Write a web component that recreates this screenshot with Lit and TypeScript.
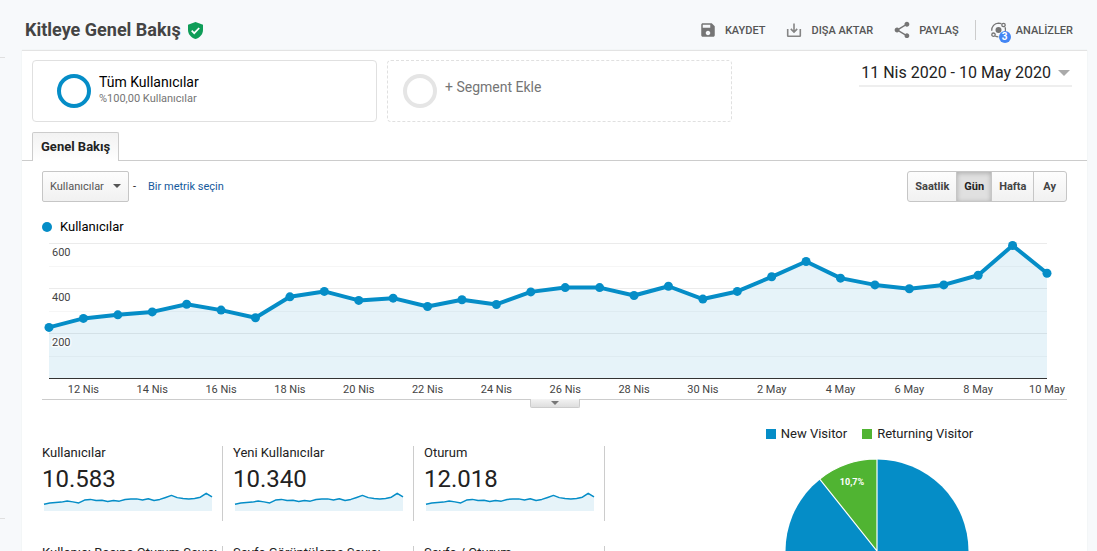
import { LitElement, html, css, svg } from "lit";
import { customElement, property, state } from "lit/decorators.js";
import { classMap } from "lit/directives/class-map.js";

const DAILY_USERS = [
  227, 267, 283, 296, 330, 304, 270, 363, 387, 347, 357, 320, 350, 329, 385,
  404, 404, 369, 410, 353, 387, 452, 520, 446, 416, 399, 416, 459, 591, 468,
];

const FIRST_DAY = 11;
const DAYS_IN_APRIL = 30;
const AXIS_MAX = 600;

function dayLabel(index: number): string {
  const day = FIRST_DAY + index;
  return day <= DAYS_IN_APRIL ? `${day} Nis` : `${day - DAYS_IN_APRIL} May`;
}

@customElement("trend-chart")
export class TrendChart extends LitElement {
  @property({ attribute: false }) values: number[] = [];

  static styles = css`
    :host { display: block; }
    .plot { display: block; width: 100%; height: 156px; overflow: visible; }
    .inner { overflow: visible; }
    .grid { stroke: #000; stroke-opacity: 0.08; }
    .grid.minor { stroke-opacity: 0.035; }
    .axis { stroke: #333; }
    .area { fill: #058dc7; fill-opacity: 0.1; }
    .line { fill: none; stroke: #058dc7; stroke-width: 4; stroke-linejoin: round; vector-effect: non-scaling-stroke; }
    .dot { fill: #058dc7; }
    .label { font-size: 11px; fill: #444; }
    .tick { text-anchor: middle; }
    .halo { stroke: #fff; stroke-width: 3; stroke-opacity: 0.7; paint-order: stroke; stroke-linejoin: round; }
  `;

  render() {
    const last = this.values.length - 1;
    const points = this.values.map((v, i) => `${i},${AXIS_MAX - v}`).join(" ");
    const y = (v: number) => 0.5 + ((AXIS_MAX - v) * 135) / AXIS_MAX;
    const x = (i: number) => `${(i / last) * 100}%`;
    return html`<svg class="plot" role="img" aria-label="Kullanıcılar">
      ${[600, 500, 400, 300, 200, 100].map(
        (v) => svg`<line class=${v % 200 ? "grid minor" : "grid"} x1="0" x2="100%" y1=${Math.floor(y(v)) + 0.5} y2=${Math.floor(y(v)) + 0.5}></line>`
      )}
      <svg class="inner" x="0" y="0.5" width="100%" height="135" viewBox="0 0 ${last} ${AXIS_MAX}" preserveAspectRatio="none">
        <polygon class="area" points="0,${AXIS_MAX} ${points} ${last},${AXIS_MAX}"></polygon>
        <polyline class="line" points=${points}></polyline>
      </svg>
      <line class="axis" x1="0" x2="100%" y1="135.5" y2="135.5"></line>
      ${this.values.map((v, i) => svg`<circle class="dot" cx=${x(i)} cy=${y(v)} r="4.5"></circle>`)}
      ${[600, 400, 200].map((v) => svg`<text class="label halo" x="3" y=${y(v) + 12.5}>${v}</text>`)}
      ${this.values.map((_, i) => (i % 2 ? svg`<text class="label tick" x=${x(i)} y="150">${dayLabel(i)}</text>` : null))}
    </svg>`;
  }
}

@customElement("metric-tile")
export class MetricTile extends LitElement {
  @property() label = "";
  @property() value = "";
  @property({ attribute: false }) values: number[] = [];

  static styles = css`
    :host { display: block; height: 75px; border-right: 1px solid #ccc; color: #222; white-space: nowrap; }
    .label { font-size: 13px; line-height: 13px; }
    .value { font-size: 24px; line-height: 28px; margin-top: 6px; }
    .spark { display: block; width: calc(100% - 12px); height: 18px; margin-left: 2px; overflow: visible; }
    .area { fill: #058dc7; fill-opacity: 0.1; }
    .line { fill: none; stroke: #058dc7; stroke-width: 1.5; stroke-linejoin: round; vector-effect: non-scaling-stroke; }
  `;

  render() {
    const last = this.values.length - 1;
    const points = this.values.map((v, i) => `${i},${AXIS_MAX - v}`).join(" ");
    return html`
      <div class="label">${this.label}</div>
      <div class="value">${this.value}</div>
      <svg class="spark" viewBox="0 0 ${last} ${AXIS_MAX}" preserveAspectRatio="none" aria-hidden="true">
        <polygon class="area" points="0,${AXIS_MAX} ${points} ${last},${AXIS_MAX}"></polygon>
        <polyline class="line" points=${points}></polyline>
      </svg>
    `;
  }
}

@customElement("visitor-pie")
export class VisitorPie extends LitElement {
  @property({ type: Number }) returning = 0;

  static styles = css`
    :host { display: flex; flex-direction: column; align-items: center; }
    .legend { display: flex; font-size: 13px; line-height: 18px; color: #222; }
    .item { display: flex; align-items: center; gap: 5px; margin-right: 15px; }
    .swatch { width: 10px; height: 10px; background: #058dc7; }
    .swatch.green { background: #50b432; }
    .pie { display: block; width: 184px; height: 184px; margin-top: 16px; }
    .share { font-size: 9px; font-weight: 700; fill: #fff; text-anchor: middle; }
  `;

  render() {
    const angle = (this.returning / 100) * 2 * Math.PI;
    const px = 92 - 92 * Math.sin(angle);
    const py = 92 - 92 * Math.cos(angle);
    return html`
      <div class="legend">
        <span class="item"><span class="swatch"></span>New Visitor</span>
        <span class="item"><span class="swatch green"></span>Returning Visitor</span>
      </div>
      <svg class="pie" viewBox="0 0 184 184" role="img" aria-label="New Visitor, Returning Visitor">
        <circle cx="92" cy="92" r="91.5" fill="#058dc7"></circle>
        <path d="M92 92L${px} ${py}A92 92 0 0 1 92 0Z" fill="#50b432" stroke="#fff" stroke-width="1.2"></path>
        <text class="share" x="67" y="26">${this.returning.toLocaleString("tr-TR")}%</text>
      </svg>
    `;
  }
}

@customElement("app-root")
export class AppRoot extends LitElement {
  @state() private period = "Gün";

  static styles = css`
    :host {
      display: flex;
      height: 100vh;
      overflow: hidden;
      background: #f7f9fb;
      font-family: Roboto, sans-serif;
      color: #222;
    }
    *, *::before, *::after { box-sizing: border-box; }
    button, select { font-family: inherit; margin: 0; }
    .rail { width: 22px; flex: none; }
    .divider { width: 5px; border: 0; border-top: 1px solid #e0e0e0; margin: 57px 0 0; }
    .divider + .divider { margin-top: 460px; }
    .page { flex: 1; min-width: 0; display: flex; flex-direction: column; padding-right: 10px; }
    .header { height: 50px; flex: none; display: flex; align-items: center; justify-content: space-between; padding: 10px 14px 0 3px; }
    .heading { display: flex; align-items: center; gap: 7px; }
    .title { margin: 0; font-size: 18px; line-height: 22px; font-weight: 700; color: #444; }
    .shield { display: block; width: 15px; height: 17px; }
    .actions { display: flex; align-items: center; gap: 20px; }
    .action { display: flex; align-items: center; gap: 8px; padding: 0; border: 0; background: none; font-size: 11px; line-height: 18px; font-weight: 500; color: #555; }
    .action-label { padding-top: 1px; }
    .action svg { display: block; width: 18px; height: 18px; fill: #757575; overflow: visible; }
    .insights { border-left: 1px solid #ccc; padding-left: 14px; height: 20px; margin-left: -4px; }
    .icon-wrap { position: relative; }
    .badge { position: absolute; left: 9px; top: 10px; width: 12px; height: 12px; border-radius: 50%; background: #4285f4; color: #fff; font-size: 10px; line-height: 12px; font-weight: 700; text-align: center; }
    .panel { flex: 1; background: #fff; border-top: 1px solid #e3e3e3; box-shadow: 0 0 1px #e0e4e8; }
    .segments { display: flex; align-items: flex-start; gap: 10px; padding: 9px 15px 10px 10px; }
    .segment { display: flex; align-items: center; gap: 8px; flex: 0 1 345px; height: 62px; padding: 0 16px 0 24px; border: 1px solid #e0e0e0; border-radius: 4px; background: #fff; text-align: left; }
    .segment.add { border-style: dashed; padding-left: 15px; font-size: 14px; color: #757575; }
    .ring { width: 34px; height: 34px; flex: none; border: 4px solid #058dc7; border-radius: 50%; }
    .add .ring { border-color: #e5e5e5; }
    .add-label { line-height: 16px; padding-bottom: 9px; }
    .segment-text { display: flex; flex-direction: column; }
    .segment-name { font-size: 14px; line-height: 16px; padding-bottom: 2px; color: #000; }
    .segment-share { font-size: 11px; line-height: 14px; padding-bottom: 2px; color: #757575; }
    .date { display: flex; align-items: center; gap: 7px; margin-left: auto; height: 27px; padding: 0 2px; border: 0; border-bottom: 2px solid #eee; background: none; font-size: 16px; color: #222; white-space: nowrap; }
    .caret { border: 6px solid transparent; border-top-color: #aaa; border-bottom: 0; }
    .tabs { display: flex; padding-left: 10px; border-bottom: 1px solid #ccc; }
    .tab { height: 29px; margin-bottom: -1px; padding: 0 8px 1px; border: 1px solid #ccc; border-bottom: 0; border-radius: 2px 2px 0 0; background: linear-gradient(#f2f2f2, #fff); font-size: 13px; font-weight: 700; color: #222; }
    .content { padding: 10px 20px 0; }
    .controls { display: flex; align-items: center; }
    .picker { position: relative; display: flex; }
    .picker select { appearance: none; width: 87px; height: 31px; padding: 0 7px; border: 1px solid #c6c6c6; border-radius: 2px; background: linear-gradient(#fdfdfd, #f1f1f1); font-size: 11px; color: #555; }
    .picker .caret { position: absolute; right: 8px; top: 13px; border-width: 4px 4px 0; border-top-color: #555; pointer-events: none; }
    .dash { width: 19px; padding-left: 4px; font-size: 11px; }
    .link { font-size: 11px; color: #15599c; text-decoration: none; }
    .periods { display: flex; margin-left: auto; }
    .period { height: 31px; padding: 0 7px; margin-left: -1px; border: 1px solid #c6c6c6; background: linear-gradient(#fdfdfd, #f1f1f1); font-size: 11px; font-weight: 700; color: #444; }
    .period:first-child { border-radius: 3px 0 0 3px; }
    .period:last-child { border-radius: 0 3px 3px 0; padding: 0 10px 0 9px; }
    .period.on { background: #e0e0e0; box-shadow: inset 0 1px 5px #aaa; color: #222; }
    .series { display: flex; align-items: center; gap: 8px; margin-top: 16px; font-size: 13px; line-height: 17px; color: #000; }
    .series-dot { width: 10px; height: 10px; border-radius: 50%; background: #058dc7; }
    .chart { padding: 8px 20px 0 7px; border-bottom: 1px solid #ccc; }
    .handle { display: flex; align-items: center; justify-content: center; width: 50px; height: 9px; margin: -1px auto 0; padding: 0; border: 1px solid #ccc; border-top: 0; border-radius: 0 0 2px 2px; background: linear-gradient(#f3f3f3, #dedede); }
    .handle .caret { border-width: 4px 4px 0; border-top-color: #777; }
    .summary { display: flex; align-items: flex-start; margin-top: 17px; }
    .metrics { display: grid; grid-template-columns: repeat(3, 181px); gap: 25px 10px; flex: none; padding-top: 21px; }
    .visitors { flex: 1; margin-left: 82px; }
  `;

  private renderIcon(name: string) {
    switch (name) {
      case "save":
        return html`<svg viewBox="0 0 24 24" aria-hidden="true"><path d="M17 3H5c-1.11 0-2 .9-2 2v14c0 1.1.89 2 2 2h14c1.1 0 2-.9 2-2V7l-4-4zm-5 16c-1.66 0-3-1.34-3-3s1.34-3 3-3 3 1.34 3 3-1.34 3-3 3zm3-10H5V5h10v4z"></path></svg>`;
      case "export":
        return html`<svg viewBox="0 0 18 18" aria-hidden="true"><path d="M2.700 8V14.700Q2.700 15.200 3.200 15.200H14.800Q15.300 15.200 15.300 14.700V8M9 2.500V11M5.800 7.900L9 11.100L12.200 7.900" fill="none" stroke="#858585" stroke-width="1.600"></path></svg>`;
      case "share":
        return html`<svg viewBox="1 1 22 22" aria-hidden="true"><path d="M18 16.080c-.76 0-1.440.3-1.960.77L8.910 12.700c.05-.23.09-.46.09-.7s-.04-.47-.09-.7l7.050-4.110c.54.5 1.250.81 2.040.81 1.660 0 3-1.340 3-3s-1.340-3-3-3-3 1.340-3 3c0 .24.04.47.09.7L8.040 9.810C7.500 9.310 6.790 9 6 9c-1.660 0-3 1.340-3 3s1.340 3 3 3c.79 0 1.500-.31 2.040-.81l7.120 4.160c-.05.21-.08.43-.08.65 0 1.610 1.310 2.920 2.920 2.920s2.920-1.310 2.920-2.920-1.310-2.920-2.920-2.920z"></path></svg>`;
      default:
        return html`<svg viewBox="0 0 18 18" aria-hidden="true">
          <circle cx="8.500" cy="9" r="3"></circle>
          <g fill="none" stroke="#757575" stroke-width="1.300">
            <path d="M1.700 9.800C1.500 5.500 4.500 2.300 8.500 2.100c1.200 0 2 .2 2.900.6M15.100 6.300c.5 1.500.5 3 .1 4.300M5.200 15c1 .6 2 .9 3.200.9"></path>
            <circle cx="13.500" cy="4" r="1.700"></circle>
            <circle cx="3.500" cy="13.700" r="1.700"></circle>
          </g>
        </svg>`;
    }
  }

  render() {
    const metrics = [
      ["Kullanıcılar", "10.583"],
      ["Yeni Kullanıcılar", "10.340"],
      ["Oturum", "12.018"],
      ["Kullanıcı Başına Oturum Sayısı", "1,14"],
      ["Sayfa Görüntüleme Sayısı", "19.540"],
      ["Sayfa / Oturum", "1,63"],
    ];
    return html`
      <aside class="rail"><hr class="divider" /><hr class="divider" /></aside>
      <div class="page">
        <header class="header">
          <div class="heading">
            <h1 class="title">Kitleye Genel Bakış</h1>
            <svg class="shield" viewBox="0 0 15 17" aria-hidden="true">
              <path d="M7.500 0L15 2.800V8c0 4.200-3.200 7.800-7.500 9C3.200 15.800 0 12.200 0 8V2.800z" fill="#0f9d58"></path>
              <path d="M3.700 8.700l2.500 2.500 5-5.200" fill="none" stroke="#fff" stroke-width="1.700"></path>
            </svg>
          </div>
          <div class="actions">
            <button class="action">${this.renderIcon("save")}<span class="action-label">KAYDET</span></button>
            <button class="action">${this.renderIcon("export")}<span class="action-label">DIŞA AKTAR</span></button>
            <button class="action">${this.renderIcon("share")}<span class="action-label">PAYLAŞ</span></button>
            <button class="action insights">
              <span class="icon-wrap">${this.renderIcon("insights")}<span class="badge">3</span></span>
              <span class="action-label">ANALİZLER</span>
            </button>
          </div>
        </header>
        <main class="panel">
          <div class="segments">
            <button class="segment">
              <span class="ring"></span>
              <span class="segment-text">
                <span class="segment-name">Tüm Kullanıcılar</span>
                <span class="segment-share">%100,00 Kullanıcılar</span>
              </span>
            </button>
            <button class="segment add"><span class="ring"></span><span class="add-label">+ Segment Ekle</span></button>
            <button class="date">11 Nis 2020 - 10 May 2020<span class="caret"></span></button>
          </div>
          <nav class="tabs"><button class="tab">Genel Bakış</button></nav>
          <div class="content">
            <div class="controls">
              <div class="picker">
                <select aria-label="Metrik"><option>Kullanıcılar</option></select>
                <span class="caret"></span>
              </div>
              <span class="dash">-</span>
              <a class="link" href="#">Bir metrik seçin</a>
              <div class="periods">
                ${["Saatlik", "Gün", "Hafta", "Ay"].map(
                  (p) => html`<button
                    class=${classMap({ period: true, on: p === this.period })}
                    aria-pressed=${p === this.period}
                    @click=${() => (this.period = p)}
                  >${p}</button>`
                )}
              </div>
            </div>
            <div class="series"><span class="series-dot"></span>Kullanıcılar</div>
            <div class="chart"><trend-chart .values=${DAILY_USERS}></trend-chart></div>
            <button class="handle" aria-label="Grafiği daralt"><span class="caret"></span></button>
            <div class="summary">
              <div class="metrics">
                ${metrics.map(
                  ([label, value]) => html`<metric-tile label=${label} value=${value} .values=${DAILY_USERS}></metric-tile>`
                )}
              </div>
              <visitor-pie class="visitors" .returning=${10.7}></visitor-pie>
            </div>
          </div>
        </main>
      </div>
    `;
  }
}
